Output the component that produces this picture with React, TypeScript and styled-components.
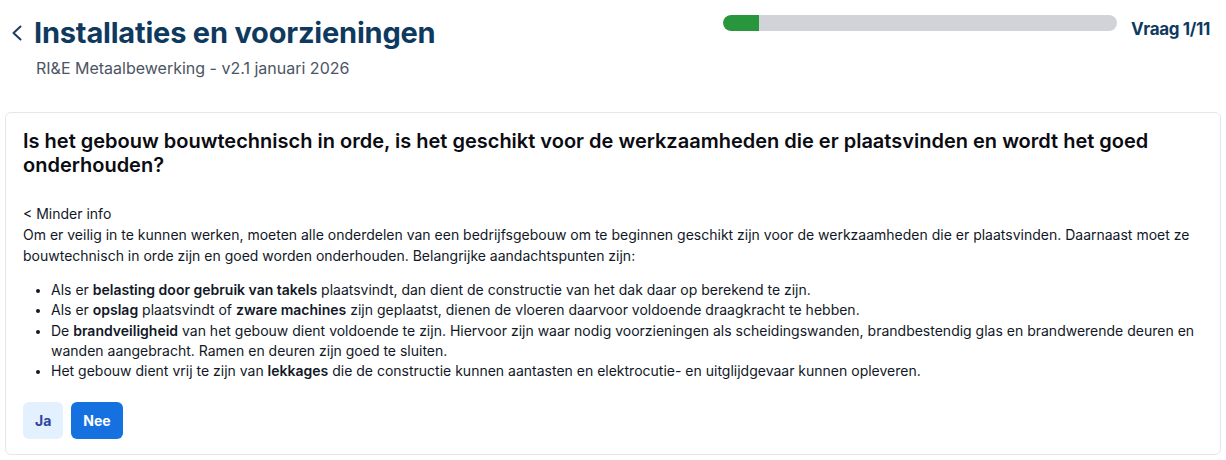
import React from 'react';
import styled, { createGlobalStyle } from 'styled-components';

const GlobalStyle = createGlobalStyle`
  body {
    margin: 0;
    background: #ffffff;
    font-family: Inter, "Noto Sans", sans-serif;
    color: #111827;
  }
`;

const Page = styled.div`
  width: 1226px;
  height: 460px;
  box-sizing: border-box;
  padding: 0 5px;
  display: flex;
  flex-direction: column;
`;

const Header = styled.header`
  display: flex;
  justify-content: space-between;
  align-items: flex-start;
  height: 112px;
  box-sizing: border-box;
  padding: 14px 11px 0 0;
`;

const TitleBlock = styled.div`
  display: flex;
  flex-direction: column;
`;

const TitleRow = styled.div`
  display: flex;
  align-items: center;
  gap: 8px;
`;

const BackButton = styled.button`
  display: flex;
  align-items: center;
  justify-content: flex-start;
  width: 21px;
  height: 24px;
  padding: 0 0 0 6px;
  border: none;
  background: none;
  color: #1f3a5a;
  cursor: pointer;
`;

const Title = styled.h1`
  margin: 0;
  font-size: 29px;
  line-height: 38px;
  font-weight: 700;
  color: #0f3a5f;
  letter-spacing: -0.2px;
`;

const Subtitle = styled.div`
  margin: 6px 0 0 31px;
  font-size: 16px;
  line-height: 20px;
  color: #4b5563;
`;

const ProgressArea = styled.div`
  display: flex;
  align-items: flex-start;
  gap: 14px;
`;

const Track = styled.div`
  width: 394px;
  height: 16px;
  margin-top: 1px;
  border-radius: 8px;
  background: #d1d3d8;
  overflow: hidden;
`;

const Fill = styled.div`
  height: 100%;
  background: #27963c;
  border-radius: 8px 0 0 8px;
`;

const Counter = styled.div`
  margin-top: 5px;
  font-size: 17px;
  line-height: 20px;
  font-weight: 700;
  color: #0f3a5f;
  letter-spacing: -0.35px;
`;

const Card = styled.section`
  border: 1px solid #e5e7eb;
  border-radius: 6px;
  padding: 16px 17px 15px;
  height: 343px;
  box-sizing: border-box;
`;

const Question = styled.h2`
  margin: 0;
  font-size: 20px;
  line-height: 24px;
  font-weight: 600;
  color: #0b0b12;
`;

const InfoToggle = styled.button`
  display: block;
  margin-top: 27px;
  padding: 0;
  border: none;
  background: none;
  font: inherit;
  font-size: 14px;
  line-height: 20px;
  color: #111827;
  cursor: pointer;
`;

const Paragraph = styled.p`
  margin: 0;
  font-size: 14px;
  line-height: 21px;
  color: #111827;
`;

const List = styled.ul`
  margin: 14px 0 0;
  padding-left: 28px;
  font-size: 14px;
  line-height: 20.25px;
  color: #111827;

  li::marker {
    font-size: 12px;
  }

  b {
    font-weight: 600;
  }
`;

const Actions = styled.div`
  display: flex;
  gap: 8px;
  margin-top: 21px;
`;

const AnswerButton = styled.button<{ $primary?: boolean }>`
  height: 37px;
  padding: 0 12px;
  border: none;
  border-radius: 6px;
  font-family: inherit;
  font-size: 14px;
  font-weight: 700;
  background: ${p => (p.$primary ? '#1570e0' : '#e3f0fd')};
  color: ${p => (p.$primary ? '#ffffff' : '#2f43a0')};
  cursor: pointer;
`;

export default function App() {
  const current = 1;
  const total = 11;

  return (
    <>
      <GlobalStyle />
      <Page>
        <Header>
          <TitleBlock>
            <TitleRow>
              <BackButton aria-label="Terug">
                <svg width="12" height="18" viewBox="0 0 12 18" fill="none">
                  <path d="M9.5 2.5L2.5 9L9.5 15.5" stroke="currentColor" strokeWidth="2" strokeLinecap="round" strokeLinejoin="round" />
                </svg>
              </BackButton>
              <Title>Installaties en voorzieningen</Title>
            </TitleRow>
            <Subtitle>RI&amp;E Metaalbewerking - v2.1 januari 2026</Subtitle>
          </TitleBlock>
          <ProgressArea>
            <Track>
              <Fill style={{ width: `${(current / total) * 100}%` }} />
            </Track>
            <Counter>Vraag {current}/{total}</Counter>
          </ProgressArea>
        </Header>

        <Card>
          <Question>
            Is het gebouw bouwtechnisch in orde, is het geschikt voor de werkzaamheden die er plaatsvinden en wordt het goed onderhouden?
          </Question>
          <InfoToggle>&lt; Minder info</InfoToggle>
          <Paragraph>
            Om er veilig in te kunnen werken, moeten alle onderdelen van een bedrijfsgebouw om te beginnen geschikt zijn voor de werkzaamheden die er plaatsvinden. Daarnaast moet ze bouwtechnisch in orde zijn en goed worden onderhouden. Belangrijke aandachtspunten zijn:
          </Paragraph>
          <List>
            <li>Als er <b>belasting door gebruik van takels</b> plaatsvindt, dan dient de constructie van het dak daar op berekend te zijn.</li>
            <li>Als er <b>opslag</b> plaatsvindt of <b>zware machines</b> zijn geplaatst, dienen de vloeren daarvoor voldoende draagkracht te hebben.</li>
            <li>De <b>brandveiligheid</b> van het gebouw dient voldoende te zijn. Hiervoor zijn waar nodig voorzieningen als scheidingswanden, brandbestendig glas en brandwerende deuren en wanden aangebracht. Ramen en deuren zijn goed te sluiten.</li>
            <li>Het gebouw dient vrij te zijn van <b>lekkages</b> die de constructie kunnen aantasten en elektrocutie- en uitglijdgevaar kunnen opleveren.</li>
          </List>
          <Actions>
            <AnswerButton>Ja</AnswerButton>
            <AnswerButton $primary>Nee</AnswerButton>
          </Actions>
        </Card>
      </Page>
    </>
  );
}
